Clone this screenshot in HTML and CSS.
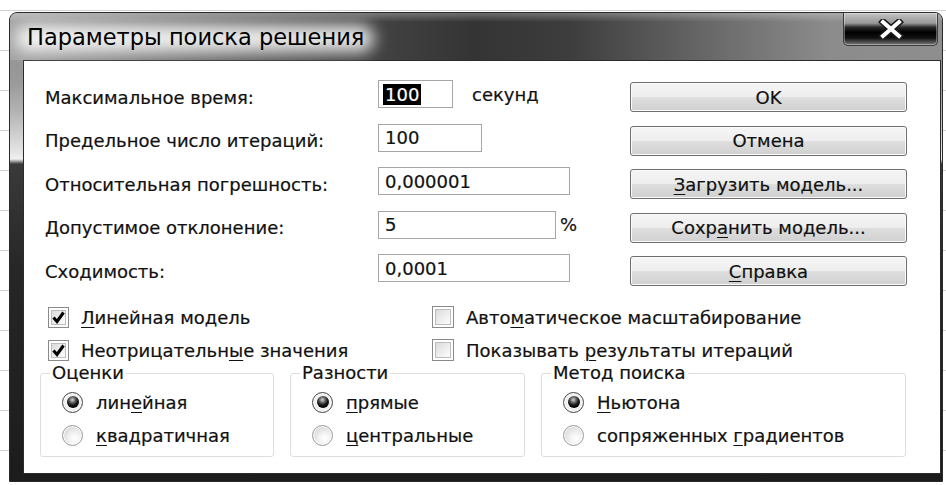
FILE: index.html
```html
<!DOCTYPE html>
<html lang="ru">
<head>
<meta charset="utf-8">
<title>Параметры поиска решения</title>
<link rel="stylesheet" href="styles.css">
</head>
<body>
<div class="desk">
  <div class="window">
    <div class="titlebar">
      <span class="title">Параметры поиска решения</span>
      <button class="close" type="button" aria-label="Закрыть">
        <svg width="28" height="20" viewBox="0 0 28 20">
          <path d="M6 3 L22 17 M22 3 L6 17" stroke="#1a1a1a" stroke-width="7" stroke-linecap="square" fill="none"/>
          <path d="M6 3 L22 17 M22 3 L6 17" stroke="#fff" stroke-width="4" stroke-linecap="square" fill="none"/>
        </svg>
      </button>
    </div>

    <div class="client">
      <div class="params">
        <span class="lbl">Максимальное время:</span>
        <div class="field"><span class="input w75"><span class="sel">100</span></span><span class="unit sec">секунд</span></div>
        <button class="btn" type="button">OK</button>

        <span class="lbl">Предельное число итераций:</span>
        <div class="field"><span class="input w104">100</span></div>
        <button class="btn" type="button">Отмена</button>

        <span class="lbl">Относительная погрешность:</span>
        <div class="field"><span class="input w192">0,000001</span></div>
        <button class="btn" type="button"><u>З</u>агрузить модель...</button>

        <span class="lbl">Допустимое отклонение:</span>
        <div class="field"><span class="input w178">5</span><span class="unit pct">%</span></div>
        <button class="btn" type="button">Сохр<u>а</u>нить модель...</button>

        <span class="lbl">Сходимость:</span>
        <div class="field"><span class="input w192">0,0001</span></div>
        <button class="btn" type="button"><u>С</u>правка</button>
      </div>

      <div class="checks">
        <div class="check"><span class="box on"><svg width="17" height="17" viewBox="0 0 17 17"><path d="M3.5 8.5 L7 12.5 L13.5 3.5" stroke="#000" stroke-width="3" fill="none"/></svg></span><span><u>Л</u>инейная модель</span></div>
        <div class="check right"><span class="box"></span><span>Авто<u>м</u>атическое масштабирование</span></div>
        <div class="check"><span class="box on"><svg width="17" height="17" viewBox="0 0 17 17"><path d="M3.5 8.5 L7 12.5 L13.5 3.5" stroke="#000" stroke-width="3" fill="none"/></svg></span><span>Неотрицательн<u>ы</u>е значения</span></div>
        <div class="check right"><span class="box"></span><span>Показывать <u>р</u>езультаты итераций</span></div>
      </div>

      <div class="groups">
        <fieldset class="group g1">
          <legend>Оценки</legend>
          <div class="radio"><span class="dot on"><span class="pip"></span></span><span>лин<u>е</u>йная</span></div>
          <div class="radio"><span class="dot"></span><span><u>к</u>вадратичная</span></div>
        </fieldset>
        <fieldset class="group g2">
          <legend>Разности</legend>
          <div class="radio"><span class="dot on"><span class="pip"></span></span><span><u>п</u>рямые</span></div>
          <div class="radio"><span class="dot"></span><span><u>ц</u>ентральные</span></div>
        </fieldset>
        <fieldset class="group g3">
          <legend>Метод поиска</legend>
          <div class="radio"><span class="dot on"><span class="pip"></span></span><span><u>Н</u>ьютона</span></div>
          <div class="radio"><span class="dot"></span><span>сопряженных <u>г</u>радиентов</span></div>
        </fieldset>
      </div>
    </div>
  </div>
</div>
</body>
</html>
```

FILE: styles.css
```css
* { box-sizing: border-box; }

html, body { margin: 0; }

body {
  width: 946px;
  height: 485px;
  overflow: hidden;
  background:
    repeating-linear-gradient(180deg, transparent 0 10px, #d2d2d2 10px 11px, transparent 11px 40px),
    #fff;
  font-family: "DejaVu Sans", Verdana, sans-serif;
  font-size: 18px;
  color: #111;
}

u { text-decoration-thickness: 1px; text-underline-offset: 3px; }

.desk { padding: 12px 0 0 9px; }

/* window frame */
.window {
  width: 934px;
  height: 470px;
  display: flex;
  flex-direction: column;
  border: 1px solid #2a2a2a;
  border-radius: 8px 8px 0 0;
  overflow: hidden;
  padding: 0 1px 7px 13px;
  background: linear-gradient(180deg,
    #8c8c8c 0, #9a9a9a 70px, #b4b4b4 100px, #e6e6e6 140px, #f2f2f2 146px,
    #3a3a3a 151px, #262626 260px, #1c1c1c 100%);
}

.titlebar {
  height: 47px;
  flex: none;
  margin: 0 -1px 0 -13px;
  padding-left: 17px;
  display: flex;
  align-items: center;
  background:
    linear-gradient(180deg, rgba(255,255,255,.28) 0, rgba(255,255,255,0) 9px),
    linear-gradient(90deg, #a4a4a4 0, #7a7a7a 16%, #474747 36%, #343434 50%, #3d3d3d 60%, #6b6b6b 76%, #8c8c8c 88%, #8e8e8e 100%);
}

.title {
  position: relative;
  z-index: 0;
  padding-top: 1px;
  font-size: 22.5px;
  color: #000;
  white-space: nowrap;
}

.title::before {
  content: "";
  position: absolute;
  inset: 2px -10px -2px -12px;
  z-index: -1;
  background: rgba(255,255,255,.88);
  border-radius: 16px;
  filter: blur(8px);
}

.close {
  align-self: flex-start;
  margin: 0 4px 0 auto;
  width: 95px;
  height: 33px;
  padding: 0;
  display: flex;
  align-items: center;
  justify-content: center;
  border: 1px solid #3c3c3c;
  border-top: none;
  border-radius: 0 0 5px 5px;
  box-shadow: inset 0 0 0 1px rgba(255,255,255,.35);
  background: linear-gradient(180deg,
    #c4c4c4 0, #979797 32%, #2c2c2c 44%, #000 60%, #111 78%, #4a4a4a 90%, #7a7a7a 100%);
}

.close svg { display: block; }

/* client area */
.client {
  flex: 1;
  width: 918px;
  background: #fff;
  border: 1px solid #2b2b2b;
  -webkit-text-stroke: 0.2px currentColor;
}

.params {
  display: grid;
  grid-template-columns: 333px 252px 277px;
  grid-auto-rows: 30px;
  row-gap: 13.5px;
  padding: 21px 0 0 21px;
  align-items: center;
}

.lbl { white-space: nowrap; }

.field {
  align-self: start;
  margin-top: -2px;
  display: flex;
  align-items: center;
  height: 28px;
}

.input {
  height: 28px;
  display: flex;
  align-items: center;
  padding-left: 6px;
  border: 1px solid #a6a6a6;
  background: #fff;
}

.w75 { width: 75px; padding-left: 4px; }
.w104 { width: 104px; }
.w178 { width: 178px; }
.w192 { width: 192px; }

.sel {
  background: #000;
  color: #fff;
  padding: 0 2px;
  line-height: 21px;
}

.unit.sec { margin-left: 19px; }
.unit.pct { margin-left: 4px; }

.btn {
  height: 30px;
  width: 277px;
  font: inherit;
  color: #111;
  padding: 0;
  border: 1px solid #6e6e6e;
  border-radius: 3px;
  box-shadow: inset 0 0 0 1px #fbfbfb;
  background: linear-gradient(180deg, #f5f5f5 0, #eeeeee 48%, #dedede 52%, #d0d0d0 100%);
}

/* check boxes */
.checks {
  display: grid;
  grid-template-columns: 384px auto;
  grid-auto-rows: 22px;
  row-gap: 11px;
  margin-top: 20px;
  padding-left: 24px;
}

.check {
  display: flex;
  align-items: center;
  gap: 12px;
  white-space: nowrap;
}

.box {
  width: 21px;
  height: 21px;
  flex: none;
  display: flex;
  align-items: center;
  justify-content: center;
  border: 1px solid #8a8a8a;
  box-shadow: inset 0 0 0 2px #fff, inset 0 0 0 3px #bdbdbd;
  background: linear-gradient(135deg, #d4d4d4, #f6f6f6 70%, #fff);
}

.check:nth-child(2n) .box { width: 22px; height: 22px; }

/* option groups */
.groups {
  display: flex;
  gap: 16px;
  margin-top: 2px;
  padding-left: 16px;
}

.group {
  margin: 0;
  min-width: 0;
  border: 1px solid #dedede;
  border-radius: 3px;
  padding: 9px 0 11px 21px;
  display: flex;
  flex-direction: column;
  gap: 13px;
}

.g1 { width: 234px; }
.g2 { width: 235px; }
.g3 { width: 365px; }

.group legend {
  padding: 0 2px;
  margin-left: -12px;
  line-height: 20px;
}

.radio {
  display: flex;
  align-items: center;
  gap: 13px;
  height: 20px;
  white-space: nowrap;
}

.dot {
  width: 21px;
  height: 21px;
  flex: none;
  border-radius: 50%;
  display: flex;
  align-items: center;
  justify-content: center;
  border: 1px solid #9a9a9a;
  box-shadow: inset 0 0 0 1px #fff;
  background: radial-gradient(circle at 62% 65%, #fff 0, #f4f4f4 30%, #d2d2d2 85%);
}

.dot.on {
  border-color: #444;
  background: radial-gradient(circle at 50% 50%, #fff 0, #eee 60%, #bdbdbd 100%);
}

.pip {
  width: 12px;
  height: 12px;
  border-radius: 50%;
  background: radial-gradient(circle at 45% 32%, #d8d8d8 0, #7a7a7a 22%, #1a1a1a 50%, #000 75%);
}
```
